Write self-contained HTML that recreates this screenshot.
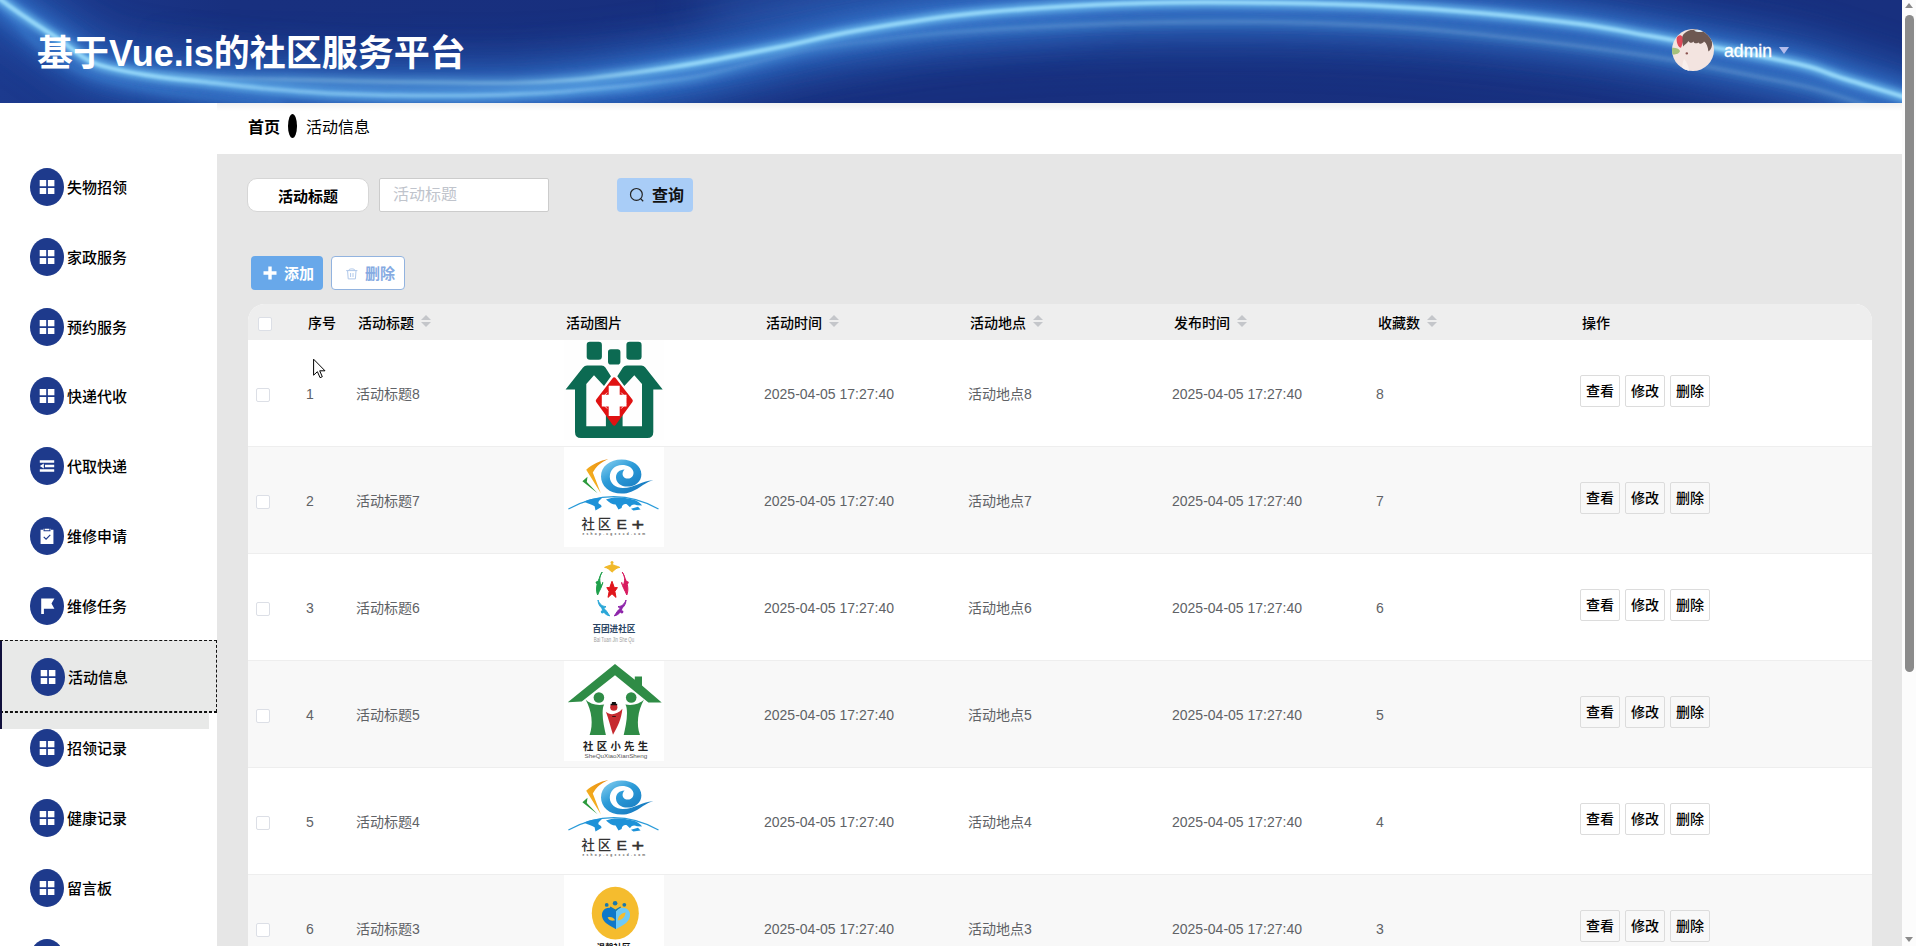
<!DOCTYPE html>
<html lang="zh-CN">
<head>
<meta charset="utf-8">
<title>基于Vue.is的社区服务平台</title>
<style>
*{box-sizing:border-box;margin:0;padding:0}
html,body{width:1916px;height:946px;overflow:hidden;background:#fff}
body{position:relative;font-family:"Liberation Sans","Noto Sans CJK SC",sans-serif;font-size:14px;color:#000}
#header{position:absolute;left:0;top:0;width:1902px;height:103px;overflow:hidden;background:#18307f}
#hbg{position:absolute;left:0;top:0}
#title{position:absolute;left:37px;top:27px;font-size:36px;font-weight:700;color:#fff;line-height:54px;white-space:nowrap}
#avatar{position:absolute;left:1672px;top:29px}
#uname{position:absolute;left:1724px;top:39px;letter-spacing:.1px;-webkit-text-stroke:.3px #fff;font-size:17.5px;line-height:24px;color:#fff}
#ucaret{position:absolute;left:1779px;top:47px;width:0;height:0;border-left:5.5px solid transparent;border-right:5.5px solid transparent;border-top:7px solid #b4bcec}
#hshadow{position:absolute;left:217px;top:103px;width:1685px;height:8px;background:linear-gradient(rgba(0,0,0,.06),rgba(0,0,0,0))}
#side{position:absolute;left:0;top:103px;width:217px;height:843px;background:#fff;overflow:hidden}
.mi{position:absolute;left:0;width:217px;height:38px;white-space:nowrap}
.ico{position:absolute;left:30px;top:0;width:34px;height:38px;border-radius:50%;background:#1e3a8c;display:block}
.ico svg{position:absolute;left:9px;top:11px}
.mt{position:absolute;left:67px;top:9px;font-size:15px;font-weight:500;line-height:22px;color:#000}
#side .mi{margin-top:-103px}
#actbg{position:absolute;left:0;top:538px;width:209px;height:88px;background:#e8e9e8}
#actbox{position:absolute;left:0;top:537px;width:217px;height:72px;background:#e8e9e8;border:1px dashed #111;border-left:0}
#actbox2{position:absolute;left:0;top:609px;width:217px;height:0;border-top:1px dashed #111}
#actbar{position:absolute;left:0;top:538px;width:2px;height:88px;background:#10103c}
#main{position:absolute;left:217px;top:103px;width:1685px;height:843px;background:#e6e6e6;overflow:hidden}
#bread{position:absolute;left:0;top:0;width:1685px;height:51px;background:#fff;font-size:16px;line-height:24px}
#bread b{position:absolute;left:31px;top:13px;font-weight:700}
#bread i{position:absolute;left:71px;top:11px;width:9px;height:24px;border-radius:50%;background:#000}
#bread span{position:absolute;left:89px;top:13px}
#slabel{position:absolute;left:30px;top:75px;width:122px;height:34px;border:1px solid #d6d6d6;border-radius:10px;background:#fff;font-size:15px;font-weight:700;text-align:center;line-height:35px}
#sinput{position:absolute;left:162px;top:75px;width:170px;height:34px;border:1px solid #ccc;border-radius:2px;background:#fff;font-size:16px;line-height:32px;color:#c0c4cc;padding-left:13px}
#sbtn{position:absolute;left:400px;top:75px;width:76px;height:34px;border-radius:4px;background:#a9cdf7;font-size:16px;font-weight:700;line-height:36px;color:#111}
#sbtn svg{position:absolute;left:12px;top:9px}
#sbtn span{position:absolute;left:35px;top:0}
#badd{position:absolute;left:34px;top:153px;width:72px;height:34px;border-radius:4px;background:#68a8ea;color:#fff;font-size:15px;font-weight:700;line-height:35px}
#badd svg{position:absolute;left:12px;top:10px}
#badd span{position:absolute;left:33px;top:0}
#bdel{position:absolute;left:114px;top:153px;width:74px;height:34px;border-radius:4px;background:#fff;border:1px solid #92b3df;color:#86abe2;font-size:15px;font-weight:700;line-height:34px}
#bdel svg{position:absolute;left:13px;top:10px}
#bdel span{position:absolute;left:33px;top:0}
#tbl{position:absolute;left:31px;top:201px;width:1624px;height:700px;border-radius:17px 17px 0 0;overflow:hidden;background:#fff}
.thead{position:absolute;left:0;top:0;width:1624px;height:36px;background:#eee}
.th{position:absolute;top:8px;font-size:14px;font-weight:500;line-height:22px;color:#000;white-space:nowrap}
.hcb{position:absolute;left:10px;top:13px;width:14px;height:14px;border:1px solid #dcdfe6;border-radius:2px;background:#fff}
.cw{display:inline-block;position:relative;width:10px;height:14px;margin-left:7px;vertical-align:top;top:3px}
.cu{position:absolute;left:0;top:0;border:5px solid transparent;border-top-width:0;border-bottom-color:#c4c6ca}
.cd{position:absolute;left:0;top:7px;border:5px solid transparent;border-bottom-width:0;border-top-color:#c4c6ca}
.tr{position:absolute;left:0;width:1624px;height:107px;border-bottom:1px solid #eee;background:#fff}
.tr.st{background:#f8f8f8}
.cb{position:absolute;left:8px;top:48px;width:14px;height:14px;border:1px solid #dcdfe6;border-radius:2px;background:#fff}
.td{position:absolute;top:43px;font-size:14px;line-height:23px;color:#606266;white-space:nowrap}
.pic{position:absolute;left:316px;top:0;width:100px;height:100px;display:block;background:#fff}
.pic svg{display:block}
.ops{position:absolute;left:1332px;top:35px;white-space:nowrap;font-size:0}
.ops b{display:inline-block;width:40px;height:32px;margin-right:5px;border:1px solid #dcdcdc;border-radius:2px;font-size:14px;font-weight:500;line-height:31px;text-align:center;color:#000}
#sbar{position:absolute;left:1902px;top:0;width:14px;height:946px;background:#fcfcfc}
#sthumb{position:absolute;left:3px;top:15px;width:9px;height:657px;border-radius:4.5px;background:#8b8b8b}
#sup{position:absolute;left:3px;top:3px;width:0;height:0;border-left:4.5px solid transparent;border-right:4.5px solid transparent;border-bottom:5px solid #8b8b8b}
#sdn{position:absolute;left:3px;top:937px;width:0;height:0;border-left:4.5px solid transparent;border-right:4.5px solid transparent;border-top:5px solid #8b8b8b}
#cursor{position:absolute;left:312px;top:358px}
</style>
</head>
<body>
<div id="header">
<svg id="hbg" width="1902" height="103" viewBox="0 0 1902 103" preserveAspectRatio="none">
<defs>
<linearGradient id="hg" x1="0" y1="0" x2="1" y2="0">
<stop offset="0" stop-color="#1c3a8e"/><stop offset="0.12" stop-color="#18307f"/><stop offset="0.5" stop-color="#182f7e"/><stop offset="1" stop-color="#18307f"/>
</linearGradient>
<linearGradient id="mLg" gradientUnits="userSpaceOnUse" x1="0" y1="0" x2="1902" y2="0">
<stop offset="0" stop-color="#fff"/><stop offset="0.33" stop-color="#fff"/><stop offset="0.42" stop-color="#8a8a8a"/><stop offset="1" stop-color="#8a8a8a"/>
</linearGradient>
<linearGradient id="mUg" gradientUnits="userSpaceOnUse" x1="0" y1="0" x2="1902" y2="0">
<stop offset="0.07" stop-color="#000"/><stop offset="0.15" stop-color="#707070"/><stop offset="0.27" stop-color="#8c8c8c"/><stop offset="0.36" stop-color="#fff"/><stop offset="1" stop-color="#fff"/>
</linearGradient>
<mask id="mL" maskUnits="userSpaceOnUse" x="-40" y="-60" width="2000" height="240"><rect x="-40" y="-60" width="2000" height="240" fill="url(#mLg)"/></mask>
<mask id="mU" maskUnits="userSpaceOnUse" x="-40" y="-60" width="2000" height="240"><rect x="-40" y="-60" width="2000" height="240" fill="url(#mUg)"/></mask>
<filter id="b30" x="-10%" y="-100%" width="120%" height="300%"><feGaussianBlur stdDeviation="22"/></filter>
<filter id="b12" x="-10%" y="-100%" width="120%" height="300%"><feGaussianBlur stdDeviation="9"/></filter>
<filter id="b4" x="-10%" y="-100%" width="120%" height="300%"><feGaussianBlur stdDeviation="3"/></filter>
<filter id="b1" x="-10%" y="-100%" width="120%" height="300%"><feGaussianBlur stdDeviation="1.1"/></filter>
</defs>
<rect width="1902" height="103" fill="url(#hg)"/>
<ellipse cx="900" cy="6" rx="210" ry="26" fill="#3a74cc" opacity="0.45" filter="url(#b30)"/>
<g fill="none" stroke-linecap="round">
<path d="M-8.0 -6.0C-6.7 -4.2 -4.0 0.5 0.0 5.0C4.0 9.5 10.8 15.5 16.0 21.0C21.2 26.5 24.5 32.0 31.0 38.0C37.5 44.0 45.2 51.0 55.0 57.0C64.8 63.0 75.8 69.0 90.0 74.0C104.2 79.0 121.7 83.3 140.0 87.0C158.3 90.7 176.7 93.5 200.0 96.0C223.3 98.5 266.7 101.0 280.0 102.0" stroke="#3c82d6" stroke-width="10" opacity="0.6" filter="url(#b12)"/>
<path d="M-8.0 -6.0C-6.7 -4.2 -4.0 0.5 0.0 5.0C4.0 9.5 10.8 15.5 16.0 21.0C21.2 26.5 24.5 32.0 31.0 38.0C37.5 44.0 45.2 51.0 55.0 57.0C64.8 63.0 75.8 69.0 90.0 74.0C104.2 79.0 121.7 83.3 140.0 87.0C158.3 90.7 176.7 93.5 200.0 96.0C223.3 98.5 266.7 101.0 280.0 102.0" stroke="#5aa6e4" stroke-width="4" opacity="0.5" filter="url(#b4)"/>
<g mask="url(#mL)">
<path d="M-14.0 -12.0C-11.7 -10.2 -4.3 -4.3 0.0 -1.0C4.3 2.3 7.8 5.0 12.0 8.0C16.2 11.0 20.8 14.2 25.0 17.0C29.2 19.8 31.2 21.2 37.0 25.0C42.8 28.8 50.5 33.7 60.0 40.0C69.5 46.3 79.7 57.2 94.0 63.0C108.3 68.8 126.8 71.8 146.0 75.0C165.2 78.2 188.2 80.2 209.0 82.5C229.8 84.8 250.2 87.2 271.0 89.0C291.8 90.8 312.5 92.5 334.0 93.5C355.5 94.5 380.7 95.0 400.0 95.3C419.3 95.6 435.3 95.6 450.0 95.6C464.7 95.5 471.3 95.5 488.0 95.0C504.7 94.5 529.2 93.8 550.0 92.5C570.8 91.2 594.7 88.8 613.0 87.0C631.3 85.2 645.5 83.4 660.0 81.5C674.5 79.6 683.3 78.9 700.0 75.5C716.7 72.1 742.2 65.2 760.0 61.0C777.8 56.8 788.7 53.3 807.0 50.0C825.3 46.7 847.8 43.8 870.0 41.0C892.2 38.2 906.2 35.7 940.0 33.0C973.8 30.3 1034.2 26.8 1073.0 25.0C1111.8 23.2 1138.5 22.5 1173.0 22.0C1207.5 21.5 1240.0 21.0 1280.0 22.0C1320.0 23.0 1368.7 24.7 1413.0 28.0C1457.3 31.3 1506.5 37.3 1546.0 42.0C1585.5 46.7 1624.3 52.2 1650.0 56.0C1675.7 59.8 1683.3 61.8 1700.0 65.0C1716.7 68.2 1732.0 71.3 1750.0 75.0C1768.0 78.7 1792.2 83.2 1808.0 87.0C1823.8 90.8 1833.0 94.2 1845.0 98.0C1857.0 101.8 1874.2 108.0 1880.0 110.0" stroke="#2f6cc4" stroke-width="46" opacity="0.78" filter="url(#b30)"/>
<path d="M-14.0 -12.0C-11.7 -10.2 -4.3 -4.3 0.0 -1.0C4.3 2.3 7.8 5.0 12.0 8.0C16.2 11.0 20.8 14.2 25.0 17.0C29.2 19.8 31.2 21.2 37.0 25.0C42.8 28.8 50.5 33.7 60.0 40.0C69.5 46.3 79.7 57.2 94.0 63.0C108.3 68.8 126.8 71.8 146.0 75.0C165.2 78.2 188.2 80.2 209.0 82.5C229.8 84.8 250.2 87.2 271.0 89.0C291.8 90.8 312.5 92.5 334.0 93.5C355.5 94.5 380.7 95.0 400.0 95.3C419.3 95.6 435.3 95.6 450.0 95.6C464.7 95.5 471.3 95.5 488.0 95.0C504.7 94.5 529.2 93.8 550.0 92.5C570.8 91.2 594.7 88.8 613.0 87.0C631.3 85.2 645.5 83.4 660.0 81.5C674.5 79.6 683.3 78.9 700.0 75.5C716.7 72.1 742.2 65.2 760.0 61.0C777.8 56.8 788.7 53.3 807.0 50.0C825.3 46.7 847.8 43.8 870.0 41.0C892.2 38.2 906.2 35.7 940.0 33.0C973.8 30.3 1034.2 26.8 1073.0 25.0C1111.8 23.2 1138.5 22.5 1173.0 22.0C1207.5 21.5 1240.0 21.0 1280.0 22.0C1320.0 23.0 1368.7 24.7 1413.0 28.0C1457.3 31.3 1506.5 37.3 1546.0 42.0C1585.5 46.7 1624.3 52.2 1650.0 56.0C1675.7 59.8 1683.3 61.8 1700.0 65.0C1716.7 68.2 1732.0 71.3 1750.0 75.0C1768.0 78.7 1792.2 83.2 1808.0 87.0C1823.8 90.8 1833.0 94.2 1845.0 98.0C1857.0 101.8 1874.2 108.0 1880.0 110.0" stroke="#3c82d6" stroke-width="18" opacity="0.80" filter="url(#b12)"/>
<path d="M-14.0 -12.0C-11.7 -10.2 -4.3 -4.3 0.0 -1.0C4.3 2.3 7.8 5.0 12.0 8.0C16.2 11.0 20.8 14.2 25.0 17.0C29.2 19.8 31.2 21.2 37.0 25.0C42.8 28.8 50.5 33.7 60.0 40.0C69.5 46.3 79.7 57.2 94.0 63.0C108.3 68.8 126.8 71.8 146.0 75.0C165.2 78.2 188.2 80.2 209.0 82.5C229.8 84.8 250.2 87.2 271.0 89.0C291.8 90.8 312.5 92.5 334.0 93.5C355.5 94.5 380.7 95.0 400.0 95.3C419.3 95.6 435.3 95.6 450.0 95.6C464.7 95.5 471.3 95.5 488.0 95.0C504.7 94.5 529.2 93.8 550.0 92.5C570.8 91.2 594.7 88.8 613.0 87.0C631.3 85.2 645.5 83.4 660.0 81.5C674.5 79.6 683.3 78.9 700.0 75.5C716.7 72.1 742.2 65.2 760.0 61.0C777.8 56.8 788.7 53.3 807.0 50.0C825.3 46.7 847.8 43.8 870.0 41.0C892.2 38.2 906.2 35.7 940.0 33.0C973.8 30.3 1034.2 26.8 1073.0 25.0C1111.8 23.2 1138.5 22.5 1173.0 22.0C1207.5 21.5 1240.0 21.0 1280.0 22.0C1320.0 23.0 1368.7 24.7 1413.0 28.0C1457.3 31.3 1506.5 37.3 1546.0 42.0C1585.5 46.7 1624.3 52.2 1650.0 56.0C1675.7 59.8 1683.3 61.8 1700.0 65.0C1716.7 68.2 1732.0 71.3 1750.0 75.0C1768.0 78.7 1792.2 83.2 1808.0 87.0C1823.8 90.8 1833.0 94.2 1845.0 98.0C1857.0 101.8 1874.2 108.0 1880.0 110.0" stroke="#6fbcee" stroke-width="10" opacity="0.90" filter="url(#b4)"/>
<path d="M-14.0 -12.0C-11.7 -10.2 -4.3 -4.3 0.0 -1.0C4.3 2.3 7.8 5.0 12.0 8.0C16.2 11.0 20.8 14.2 25.0 17.0C29.2 19.8 31.2 21.2 37.0 25.0C42.8 28.8 50.5 33.7 60.0 40.0C69.5 46.3 79.7 57.2 94.0 63.0C108.3 68.8 126.8 71.8 146.0 75.0C165.2 78.2 188.2 80.2 209.0 82.5C229.8 84.8 250.2 87.2 271.0 89.0C291.8 90.8 312.5 92.5 334.0 93.5C355.5 94.5 380.7 95.0 400.0 95.3C419.3 95.6 435.3 95.6 450.0 95.6C464.7 95.5 471.3 95.5 488.0 95.0C504.7 94.5 529.2 93.8 550.0 92.5C570.8 91.2 594.7 88.8 613.0 87.0C631.3 85.2 645.5 83.4 660.0 81.5C674.5 79.6 683.3 78.9 700.0 75.5C716.7 72.1 742.2 65.2 760.0 61.0C777.8 56.8 788.7 53.3 807.0 50.0C825.3 46.7 847.8 43.8 870.0 41.0C892.2 38.2 906.2 35.7 940.0 33.0C973.8 30.3 1034.2 26.8 1073.0 25.0C1111.8 23.2 1138.5 22.5 1173.0 22.0C1207.5 21.5 1240.0 21.0 1280.0 22.0C1320.0 23.0 1368.7 24.7 1413.0 28.0C1457.3 31.3 1506.5 37.3 1546.0 42.0C1585.5 46.7 1624.3 52.2 1650.0 56.0C1675.7 59.8 1683.3 61.8 1700.0 65.0C1716.7 68.2 1732.0 71.3 1750.0 75.0C1768.0 78.7 1792.2 83.2 1808.0 87.0C1823.8 90.8 1833.0 94.2 1845.0 98.0C1857.0 101.8 1874.2 108.0 1880.0 110.0" stroke="#92d4f7" stroke-width="4" opacity="1.00" filter="url(#b1)"/>
</g>
<g mask="url(#mU)">
<path d="M120.0 66.0C125.0 67.0 135.2 70.2 150.0 72.0C164.8 73.8 188.8 75.8 209.0 77.0C229.2 78.2 250.2 78.4 271.0 79.0C291.8 79.6 312.5 80.1 334.0 80.6C355.5 81.1 380.7 81.7 400.0 82.0C419.3 82.3 431.8 82.4 450.0 82.6C468.2 82.8 488.8 83.4 509.0 83.0C529.2 82.6 550.2 81.7 571.0 80.0C591.8 78.3 612.5 75.6 634.0 72.7C655.5 69.8 675.7 66.8 700.0 62.5C724.3 58.2 754.2 52.2 780.0 47.0C805.8 41.8 825.0 36.3 855.0 31.0C885.0 25.7 923.7 19.2 960.0 15.0C996.3 10.8 1037.5 8.1 1073.0 6.0C1108.5 3.9 1138.5 3.0 1173.0 2.5C1207.5 2.0 1245.5 2.4 1280.0 3.0C1314.5 3.6 1346.7 4.3 1380.0 6.0C1413.3 7.7 1446.7 10.0 1480.0 13.0C1513.3 16.0 1551.7 20.2 1580.0 24.0C1608.3 27.8 1627.2 32.0 1650.0 36.0C1672.8 40.0 1696.2 44.2 1717.0 48.0C1737.8 51.8 1759.5 55.8 1775.0 59.0C1790.5 62.2 1798.3 63.7 1810.0 67.0C1821.7 70.3 1829.8 74.2 1845.0 79.0C1860.2 83.8 1886.8 91.5 1901.0 96.0C1915.2 100.5 1925.2 104.3 1930.0 106.0" stroke="#2f6cc4" stroke-width="46" opacity="0.78" filter="url(#b30)"/>
<path d="M120.0 66.0C125.0 67.0 135.2 70.2 150.0 72.0C164.8 73.8 188.8 75.8 209.0 77.0C229.2 78.2 250.2 78.4 271.0 79.0C291.8 79.6 312.5 80.1 334.0 80.6C355.5 81.1 380.7 81.7 400.0 82.0C419.3 82.3 431.8 82.4 450.0 82.6C468.2 82.8 488.8 83.4 509.0 83.0C529.2 82.6 550.2 81.7 571.0 80.0C591.8 78.3 612.5 75.6 634.0 72.7C655.5 69.8 675.7 66.8 700.0 62.5C724.3 58.2 754.2 52.2 780.0 47.0C805.8 41.8 825.0 36.3 855.0 31.0C885.0 25.7 923.7 19.2 960.0 15.0C996.3 10.8 1037.5 8.1 1073.0 6.0C1108.5 3.9 1138.5 3.0 1173.0 2.5C1207.5 2.0 1245.5 2.4 1280.0 3.0C1314.5 3.6 1346.7 4.3 1380.0 6.0C1413.3 7.7 1446.7 10.0 1480.0 13.0C1513.3 16.0 1551.7 20.2 1580.0 24.0C1608.3 27.8 1627.2 32.0 1650.0 36.0C1672.8 40.0 1696.2 44.2 1717.0 48.0C1737.8 51.8 1759.5 55.8 1775.0 59.0C1790.5 62.2 1798.3 63.7 1810.0 67.0C1821.7 70.3 1829.8 74.2 1845.0 79.0C1860.2 83.8 1886.8 91.5 1901.0 96.0C1915.2 100.5 1925.2 104.3 1930.0 106.0" stroke="#3c82d6" stroke-width="18" opacity="0.80" filter="url(#b12)"/>
<path d="M120.0 66.0C125.0 67.0 135.2 70.2 150.0 72.0C164.8 73.8 188.8 75.8 209.0 77.0C229.2 78.2 250.2 78.4 271.0 79.0C291.8 79.6 312.5 80.1 334.0 80.6C355.5 81.1 380.7 81.7 400.0 82.0C419.3 82.3 431.8 82.4 450.0 82.6C468.2 82.8 488.8 83.4 509.0 83.0C529.2 82.6 550.2 81.7 571.0 80.0C591.8 78.3 612.5 75.6 634.0 72.7C655.5 69.8 675.7 66.8 700.0 62.5C724.3 58.2 754.2 52.2 780.0 47.0C805.8 41.8 825.0 36.3 855.0 31.0C885.0 25.7 923.7 19.2 960.0 15.0C996.3 10.8 1037.5 8.1 1073.0 6.0C1108.5 3.9 1138.5 3.0 1173.0 2.5C1207.5 2.0 1245.5 2.4 1280.0 3.0C1314.5 3.6 1346.7 4.3 1380.0 6.0C1413.3 7.7 1446.7 10.0 1480.0 13.0C1513.3 16.0 1551.7 20.2 1580.0 24.0C1608.3 27.8 1627.2 32.0 1650.0 36.0C1672.8 40.0 1696.2 44.2 1717.0 48.0C1737.8 51.8 1759.5 55.8 1775.0 59.0C1790.5 62.2 1798.3 63.7 1810.0 67.0C1821.7 70.3 1829.8 74.2 1845.0 79.0C1860.2 83.8 1886.8 91.5 1901.0 96.0C1915.2 100.5 1925.2 104.3 1930.0 106.0" stroke="#6fbcee" stroke-width="10" opacity="0.90" filter="url(#b4)"/>
<path d="M120.0 66.0C125.0 67.0 135.2 70.2 150.0 72.0C164.8 73.8 188.8 75.8 209.0 77.0C229.2 78.2 250.2 78.4 271.0 79.0C291.8 79.6 312.5 80.1 334.0 80.6C355.5 81.1 380.7 81.7 400.0 82.0C419.3 82.3 431.8 82.4 450.0 82.6C468.2 82.8 488.8 83.4 509.0 83.0C529.2 82.6 550.2 81.7 571.0 80.0C591.8 78.3 612.5 75.6 634.0 72.7C655.5 69.8 675.7 66.8 700.0 62.5C724.3 58.2 754.2 52.2 780.0 47.0C805.8 41.8 825.0 36.3 855.0 31.0C885.0 25.7 923.7 19.2 960.0 15.0C996.3 10.8 1037.5 8.1 1073.0 6.0C1108.5 3.9 1138.5 3.0 1173.0 2.5C1207.5 2.0 1245.5 2.4 1280.0 3.0C1314.5 3.6 1346.7 4.3 1380.0 6.0C1413.3 7.7 1446.7 10.0 1480.0 13.0C1513.3 16.0 1551.7 20.2 1580.0 24.0C1608.3 27.8 1627.2 32.0 1650.0 36.0C1672.8 40.0 1696.2 44.2 1717.0 48.0C1737.8 51.8 1759.5 55.8 1775.0 59.0C1790.5 62.2 1798.3 63.7 1810.0 67.0C1821.7 70.3 1829.8 74.2 1845.0 79.0C1860.2 83.8 1886.8 91.5 1901.0 96.0C1915.2 100.5 1925.2 104.3 1930.0 106.0" stroke="#92d4f7" stroke-width="4" opacity="1.00" filter="url(#b1)"/>
</g>
</g>
</svg>
<div id="title">基于Vue.is的社区服务平台</div>
<svg id="avatar" width="42" height="42" viewBox="0 0 42 42"><defs><clipPath id="avc"><circle cx="21" cy="21" r="21"/></clipPath><filter id="avb"><feGaussianBlur stdDeviation="0.7"/></filter></defs><g clip-path="url(#avc)"><rect width="42" height="42" fill="#f3e4e0"/><g filter="url(#avb)"><path d="M10 9C11 3 18 0 25 0.6C33 1.4 39 6 40 13C40.6 17 39 21 36.4 22.4C36 18 34.6 14 32 12.4C30.6 14.6 28 15.6 26.4 13.4C24.6 15 22 14.6 21.4 12.4C19.6 14.6 17.4 14 16.4 12C15 14.6 12.6 15.4 11.4 17.4C10.4 15 9.6 12 10 9Z" fill="#5b453f" opacity="0.88"/><path d="M4.6 9C6 5.4 9.4 5.4 10.4 8C10.8 12 10.4 16 9 18.8C6.4 18.8 4.4 14 4.6 9Z" fill="#e0485a"/><path d="M0 18.8C3 18.4 7 19.4 8 22C7.4 24.6 3 26 0 25.5Z" fill="#a5c27c"/><path d="M22 1.4C25 0.2 29 0.6 31 2.4C28 3.4 24.6 3 22 1.4Z" fill="#dfe8ee"/><ellipse cx="14.8" cy="24.4" rx="1.3" ry="1.1" fill="#8a5250"/><path d="M12 30C15 33 17 38 17 42H10C10 38 10.6 33 12 30Z" fill="#f9efec"/></g></g></svg>
<div id="uname">admin</div><div id="ucaret"></div>
</div>
<div id="side">
<div id="actbg"></div><div id="actbox"></div><div id="actbox2"></div><div id="actbar"></div>
<div class="mi" style="top:168.0px;left:0px"><span class="ico"><svg viewBox="0 0 16 16" width="16" height="16"><path fill="#fff" d="M0.7 1h6.5v6.2H0.7zM8.9 1h6.5v6.2H8.9zM0.7 8.9h6.5v6.2H0.7zM8.9 8.9h6.5v6.2H8.9z"/></svg></span><span class="mt">失物招领</span></div>
<div class="mi" style="top:238.0px;left:0px"><span class="ico"><svg viewBox="0 0 16 16" width="16" height="16"><path fill="#fff" d="M0.7 1h6.5v6.2H0.7zM8.9 1h6.5v6.2H8.9zM0.7 8.9h6.5v6.2H0.7zM8.9 8.9h6.5v6.2H8.9z"/></svg></span><span class="mt">家政服务</span></div>
<div class="mi" style="top:307.5px;left:0px"><span class="ico"><svg viewBox="0 0 16 16" width="16" height="16"><path fill="#fff" d="M0.7 1h6.5v6.2H0.7zM8.9 1h6.5v6.2H8.9zM0.7 8.9h6.5v6.2H0.7zM8.9 8.9h6.5v6.2H8.9z"/></svg></span><span class="mt">预约服务</span></div>
<div class="mi" style="top:377.3px;left:0px"><span class="ico"><svg viewBox="0 0 16 16" width="16" height="16"><path fill="#fff" d="M0.7 1h6.5v6.2H0.7zM8.9 1h6.5v6.2H8.9zM0.7 8.9h6.5v6.2H0.7zM8.9 8.9h6.5v6.2H8.9z"/></svg></span><span class="mt">快递代收</span></div>
<div class="mi" style="top:447.2px;left:0px"><span class="ico"><svg viewBox="0 0 16 16" width="16" height="16"><path fill="#fff" d="M0.8 2.3h14.4v2.4H0.8zM6 6.8h9.2v2.4H6zM0.8 11.3h14.4v2.4H0.8zM4.8 5.4v5.2L0.8 8z"/></svg></span><span class="mt">代取快递</span></div>
<div class="mi" style="top:517.3px;left:0px"><span class="ico"><svg viewBox="0 0 16 16" width="16" height="16"><g transform="translate(8 8.4) scale(1.17) translate(-8 -8.2)"><path fill="#fff" d="M2.5 2.5h2.2V1.6h6.6v.9h2.2v12.3h-11z"/><path d="M5.5 1v2.4h5V1" fill="none" stroke="#1e3a8c" stroke-width="0.9"/><path d="M5.2 8.6l2 2 3.6-3.7" fill="none" stroke="#1e3a8c" stroke-width="1"/></g></svg></span><span class="mt">维修申请</span></div>
<div class="mi" style="top:587.0px;left:0px"><span class="ico"><svg viewBox="0 0 16 16" width="16" height="16"><path fill="#fff" d="M2.2 0.4h2.7v16h-2.7zM4.8 0.4h10.6l-2.9 5.2 2.9 5.2h-10.6z"/></svg></span><span class="mt">维修任务</span></div>
<div class="mi" style="top:658.0px;left:1px"><span class="ico"><svg viewBox="0 0 16 16" width="16" height="16"><path fill="#fff" d="M0.7 1h6.5v6.2H0.7zM8.9 1h6.5v6.2H8.9zM0.7 8.9h6.5v6.2H0.7zM8.9 8.9h6.5v6.2H8.9z"/></svg></span><span class="mt">活动信息</span></div>
<div class="mi" style="top:729.0px;left:0px"><span class="ico"><svg viewBox="0 0 16 16" width="16" height="16"><path fill="#fff" d="M0.7 1h6.5v6.2H0.7zM8.9 1h6.5v6.2H8.9zM0.7 8.9h6.5v6.2H0.7zM8.9 8.9h6.5v6.2H8.9z"/></svg></span><span class="mt">招领记录</span></div>
<div class="mi" style="top:799.0px;left:0px"><span class="ico"><svg viewBox="0 0 16 16" width="16" height="16"><path fill="#fff" d="M0.7 1h6.5v6.2H0.7zM8.9 1h6.5v6.2H8.9zM0.7 8.9h6.5v6.2H0.7zM8.9 8.9h6.5v6.2H8.9z"/></svg></span><span class="mt">健康记录</span></div>
<div class="mi" style="top:869.0px;left:0px"><span class="ico"><svg viewBox="0 0 16 16" width="16" height="16"><path fill="#fff" d="M0.7 1h6.5v6.2H0.7zM8.9 1h6.5v6.2H8.9zM0.7 8.9h6.5v6.2H0.7zM8.9 8.9h6.5v6.2H8.9z"/></svg></span><span class="mt">留言板</span></div>
<div class="mi" style="top:939.0px;left:0px"><span class="ico"><svg viewBox="0 0 16 16" width="16" height="16"><path fill="#fff" d="M0.7 1h6.5v6.2H0.7zM8.9 1h6.5v6.2H8.9zM0.7 8.9h6.5v6.2H0.7zM8.9 8.9h6.5v6.2H8.9z"/></svg></span><span class="mt"></span></div>
</div>
<div id="main">
<div id="bread"><b>首页</b><i></i><span>活动信息</span></div>
<div id="slabel">活动标题</div>
<div id="sinput">活动标题</div>
<div id="sbtn"><svg width="16" height="16" viewBox="0 0 16 16"><circle cx="7.4" cy="7.4" r="5.9" fill="none" stroke="#222" stroke-width="1.2"/><path d="M11.6 11.6l2.6 2.6" stroke="#222" stroke-width="1.3" fill="none"/></svg><span>查询</span></div>
<div id="badd"><svg width="14" height="14" viewBox="0 0 14 14"><path d="M5.3 0.5h3.4v4.8h4.8v3.4H8.7v4.8H5.3V8.7H0.5V5.3h4.8z" fill="#fff"/></svg><span>添加</span></div>
<div id="bdel"><svg width="14" height="14" viewBox="0 0 14 14" fill="none" stroke="#b0c8ea" stroke-width="1"><path d="M1.2 3.6h11.2M3.6 3.4C4 1.4 9.6 1.4 10 3.4M2.6 3.9l.6 8h7.2l.6-8M5.6 6v4M8 6v4"/></svg><span>删除</span></div>
<div id="tbl">
<div class="thead"><span class="hcb"></span><span class="th" style="left:60px">序号</span><span class="th" style="left:110px">活动标题<span class="cw"><i class="cu"></i><i class="cd"></i></span></span><span class="th" style="left:318px">活动图片</span><span class="th" style="left:518px">活动时间<span class="cw"><i class="cu"></i><i class="cd"></i></span></span><span class="th" style="left:722px">活动地点<span class="cw"><i class="cu"></i><i class="cd"></i></span></span><span class="th" style="left:926px">发布时间<span class="cw"><i class="cu"></i><i class="cd"></i></span></span><span class="th" style="left:1130px">收藏数<span class="cw"><i class="cu"></i><i class="cd"></i></span></span><span class="th" style="left:1334px">操作</span></div>
<div class="tr" style="top:36px"><span class="cb"></span><span class="td" style="left:58px">1</span><span class="td" style="left:108px">活动标题8</span><span class="pic"><svg width="100" height="100" viewBox="0 0 100 100"><rect width="100" height="100" fill="#fefefe"/><g fill="#0c6a52"><rect x="22.7" y="1.8" width="15.2" height="18" rx="3.2"/><rect x="62.4" y="1.8" width="15.2" height="18" rx="3.2"/><rect x="44" y="9.3" width="12.4" height="15.3" rx="2.8"/><path d="M1.6 49.5L19 27.5Q20.6 25.5 23 25.5H37.5Q40 25.5 41.4 27.5L47 36.2L40 46L30 35.3L22.3 44V86.3H41.9V72H58.6V86.3H78V44L70.3 35.3L60.3 46L53.3 36.2L58.9 27.5Q60.3 25.5 62.8 25.5H77.3Q79.7 25.5 81.3 27.5L98.7 49.5H89.3V92Q89.3 98 83.3 98H17Q11 98 11 92V49.5Z"/></g><path d="M50.2 39.4L66.8 60.8L50.2 83.6L33.8 60.8Z" fill="#e01212" stroke="#e01212" stroke-width="4" stroke-linejoin="round"/><path d="M44.7 45.8h11v8.9h6.8v11.7h-6.8V76h-11v-9.6h-6.9V54.7h6.9z" fill="#fff"/><path d="M43.2 52.6L38.4 57.6M57.2 52.6L62 57.6M43.2 68.6L38.4 63.6M57.2 68.6L62 63.6" stroke="#fff" stroke-width="0.8"/></svg>
</span><span class="td" style="left:516px">2025-04-05 17:27:40</span><span class="td" style="left:720px">活动地点8</span><span class="td" style="left:924px">2025-04-05 17:27:40</span><span class="td" style="left:1128px">8</span><span class="ops"><b>查看</b><b>修改</b><b>删除</b></span></div>
<div class="tr st" style="top:143px"><span class="cb"></span><span class="td" style="left:58px">2</span><span class="td" style="left:108px">活动标题7</span><span class="pic"><svg width="100" height="100" viewBox="0 0 100 100"><defs><linearGradient id="swg" x1="0" y1="0" x2="1" y2="1"><stop offset="0" stop-color="#8fd4f2"/><stop offset="0.38" stop-color="#2c9bd8"/><stop offset="1" stop-color="#0f6fb8"/></linearGradient><linearGradient id="org" x1="1" y1="0" x2="0" y2="1"><stop offset="0" stop-color="#e88a12"/><stop offset="0.6" stop-color="#f2a81c"/><stop offset="1" stop-color="#f6d23a"/></linearGradient></defs><rect width="100" height="100" fill="#fff"/><path d="M44.4 12C36 13.5 28 17.5 22.2 22.8L36.8 46.3L28.8 25.6C32 19.5 37.5 14.8 44.4 12Z" fill="url(#org)"/><path d="M23.5 29.8L18.4 34.2L33.6 46.3L22.8 35Z" fill="#2c9a3c"/><path d="M89.4 33.2C80 34.6 72 46.6 57.6 46.6C45 46.6 37 38.4 37 29.4C37 19.4 46 12.6 57.6 12.6C69 12.6 77.4 19 77.4 27.4C77.4 34.6 71 39.6 63.6 39.6C56.6 39.6 52 35.4 52 30.2C52 25.6 55.4 22.6 60.6 22.4C57.4 25.4 58 30.4 62.4 31.4C67 32.4 70.2 29 69.4 24.8C68.6 20.4 63.6 18 58 18C50.6 18 45.8 23.4 45.8 29.8C45.8 36.6 51.8 41 59 41C70 41 77 34 89.4 33.2Z" fill="url(#swg)"/><path d="M4.4 62Q50 37.4 94.5 62" fill="none" stroke="#2a9bd9" stroke-width="1.3"/><g fill="#1e92d8"><path d="M20 54.5C26 52 32 51 38 50.6C37 53 33.5 54 34.6 56.5C36.5 57.5 38 58.5 37.4 60L31.5 63.5L30.6 59.2C27.5 57.5 24 56.6 20 54.5Z"/><path d="M42 52.6C46 50.6 52 50.2 56.5 50.6C60 51 66 51.6 72 53.6C74 55 77 56.6 78 58.5L73 58.2C70 56.5 67 57.6 66 60.2L62.8 57.2C60 56.6 58 58 57.6 61L54.5 62.6L51.6 57.6C48.5 57.6 45 55.6 42 52.6Z"/><path d="M67 61.8L74 59.8L76.6 62.6L69.4 63.4Z"/></g><g font-family="'Liberation Sans','Noto Sans CJK SC',sans-serif" fill="#333"><text x="17.6" y="81.8" font-size="13.4" font-weight="500">社</text><text x="33.8" y="81.8" font-size="13.4" font-weight="500">区</text><text transform="translate(52.6 81.6) scale(1.22 1)" font-size="12.8" stroke="#333" stroke-width="0.35">E</text><text transform="translate(67.4 82.6) scale(1.8 1.45)" font-size="12" stroke="#333" stroke-width="0.3">+</text><text x="18.4" y="87.8" font-size="3.2" font-weight="700" fill="#555" textLength="62.8" lengthAdjust="spacing">eshop.cgxxcd.com</text></g></svg>
</span><span class="td" style="left:516px">2025-04-05 17:27:40</span><span class="td" style="left:720px">活动地点7</span><span class="td" style="left:924px">2025-04-05 17:27:40</span><span class="td" style="left:1128px">7</span><span class="ops"><b>查看</b><b>修改</b><b>删除</b></span></div>
<div class="tr" style="top:250px"><span class="cb"></span><span class="td" style="left:58px">3</span><span class="td" style="left:108px">活动标题6</span><span class="pic"><svg width="100" height="100" viewBox="0 0 100 100"><rect width="100" height="100" fill="#fff"/><g stroke-width="1" stroke-linejoin="round"><circle cx="48" cy="8.6" r="1.5" fill="#f1b92a"/><path d="M40.6 13.4C44 11.6 46.4 11.8 48 9.8C49.6 11.8 52.4 11.6 55.8 13.4C53 13.6 50.8 15.4 48 18.2C45.4 15.4 43.4 13.6 40.6 13.4Z" fill="#f1b92a" stroke="#f1b92a"/><circle cx="33.4" cy="28.6" r="1.7" fill="#1fa04b"/><path d="M38.2 18C35.4 22 35 27 37.2 31.4C38.4 30.4 38.8 29.4 38.7 28.4C38 33 35.6 36 33.6 41C31.6 36 32.6 30 35.2 24.6C36 22 37 20 38.2 18Z" fill="#1fa04b" stroke="#1fa04b"/><circle cx="63" cy="28.6" r="1.7" fill="#d81b60"/><path d="M58.2 18C61 22 61.4 27 59.2 31.4C58 30.4 57.6 29.4 57.7 28.4C58.4 33 60.8 36 62.8 41C64.8 36 63.8 30 61.2 24.6C60.4 22 59.4 20 58.2 18Z" fill="#d81b60" stroke="#d81b60"/><path d="M48 27.3L50.3 33.6L53.4 33.6L50.9 37.4L52 43.4L48 39.8L44 43.4L45.1 37.4L42.8 33.6L45.7 33.6Z" fill="#e0161c" stroke="#e0161c"/><circle cx="38.4" cy="57.8" r="1.6" fill="#2aa7d8"/><path d="M34 46C35.6 50.6 38.6 52.4 42 52.6C41 53.6 40.4 54 39.6 54.2C42.6 56.4 43.8 59.4 45.7 61.9C41.4 61 38.8 58 37.8 54C35.4 52 34.2 49.4 34 46Z" fill="#2aa7d8" stroke="#2aa7d8"/><circle cx="57.8" cy="57.8" r="1.6" fill="#8e24aa"/><path d="M62 46C60.4 50.6 57.4 52.4 54 52.6C55 53.6 55.6 54 56.4 54.2C53.4 56.4 52.2 59.4 50.3 61.9C54.6 61 57.2 58 58.2 54C60.6 52 61.8 49.4 62 46Z" fill="#8e24aa" stroke="#8e24aa"/></g><g font-family="'Liberation Sans','Noto Sans CJK SC',sans-serif"><text x="28.4" y="78.2" font-size="8.7" font-weight="700" fill="#2b4563" textLength="43" lengthAdjust="spacingAndGlyphs">百团进社区</text><text x="29.8" y="88.4" font-size="7.2" fill="#9a9a9a" textLength="40.4" lengthAdjust="spacingAndGlyphs">Bai Tuan Jin She Qu</text></g></svg>
</span><span class="td" style="left:516px">2025-04-05 17:27:40</span><span class="td" style="left:720px">活动地点6</span><span class="td" style="left:924px">2025-04-05 17:27:40</span><span class="td" style="left:1128px">6</span><span class="ops"><b>查看</b><b>修改</b><b>删除</b></span></div>
<div class="tr st" style="top:357px"><span class="cb"></span><span class="td" style="left:58px">4</span><span class="td" style="left:108px">活动标题5</span><span class="pic"><svg width="100" height="100" viewBox="0 0 100 100"><rect width="100" height="100" fill="#fff"/><g fill="#2f8c46"><path d="M51 2.9L70.8 18.8V15.6H78V24.6L97.7 41.4H84.4L51 14.3L17.8 40.4L3.8 41.2Z"/><circle cx="34.9" cy="36.5" r="5.3"/><circle cx="67.2" cy="36.5" r="5.3"/><path d="M21.6 38.6C25.4 42.6 32 45 40.2 43.6C39 45.6 38.7 48 38.6 52C38.6 60 40.6 68 41.9 74H25.6C29.4 64 28 50 21.6 38.6Z"/><path d="M80 38.6C76.2 42.6 69.6 45 61.4 43.6C62.6 45.6 62.9 48 63 52C63 60 61 68 59.7 74H76C72.2 64 73.6 50 80 38.6Z"/></g><circle cx="49.8" cy="46.2" r="3.6" fill="#c62a2f"/><path d="M46.6 44.2h6.6v-1.4h-1.3v-1.9h-4v1.9h-1.3z" fill="#111"/><path d="M41.9 50.8C46 54.6 53 54 58.4 47.8C57.4 58 53.6 66 49 73.8C46.6 66 44.6 58 41.9 50.8Z" fill="#c62a2f"/><rect x="48.2" y="55" width="3.6" height="1" fill="#3a1212"/><g font-family="'Liberation Sans','Noto Sans CJK SC',sans-serif"><text x="19" y="88.6" font-size="10.4" font-weight="700" fill="#222" textLength="65.2" lengthAdjust="spacing">社区小先生</text><text x="20.5" y="97" font-size="5.6" fill="#555" textLength="62.8" lengthAdjust="spacingAndGlyphs">SheQuXiaoXianSheng</text></g></svg>
</span><span class="td" style="left:516px">2025-04-05 17:27:40</span><span class="td" style="left:720px">活动地点5</span><span class="td" style="left:924px">2025-04-05 17:27:40</span><span class="td" style="left:1128px">5</span><span class="ops"><b>查看</b><b>修改</b><b>删除</b></span></div>
<div class="tr" style="top:464px"><span class="cb"></span><span class="td" style="left:58px">5</span><span class="td" style="left:108px">活动标题4</span><span class="pic"><svg width="100" height="100" viewBox="0 0 100 100"><defs><linearGradient id="swg" x1="0" y1="0" x2="1" y2="1"><stop offset="0" stop-color="#8fd4f2"/><stop offset="0.38" stop-color="#2c9bd8"/><stop offset="1" stop-color="#0f6fb8"/></linearGradient><linearGradient id="org" x1="1" y1="0" x2="0" y2="1"><stop offset="0" stop-color="#e88a12"/><stop offset="0.6" stop-color="#f2a81c"/><stop offset="1" stop-color="#f6d23a"/></linearGradient></defs><rect width="100" height="100" fill="#fff"/><path d="M44.4 12C36 13.5 28 17.5 22.2 22.8L36.8 46.3L28.8 25.6C32 19.5 37.5 14.8 44.4 12Z" fill="url(#org)"/><path d="M23.5 29.8L18.4 34.2L33.6 46.3L22.8 35Z" fill="#2c9a3c"/><path d="M89.4 33.2C80 34.6 72 46.6 57.6 46.6C45 46.6 37 38.4 37 29.4C37 19.4 46 12.6 57.6 12.6C69 12.6 77.4 19 77.4 27.4C77.4 34.6 71 39.6 63.6 39.6C56.6 39.6 52 35.4 52 30.2C52 25.6 55.4 22.6 60.6 22.4C57.4 25.4 58 30.4 62.4 31.4C67 32.4 70.2 29 69.4 24.8C68.6 20.4 63.6 18 58 18C50.6 18 45.8 23.4 45.8 29.8C45.8 36.6 51.8 41 59 41C70 41 77 34 89.4 33.2Z" fill="url(#swg)"/><path d="M4.4 62Q50 37.4 94.5 62" fill="none" stroke="#2a9bd9" stroke-width="1.3"/><g fill="#1e92d8"><path d="M20 54.5C26 52 32 51 38 50.6C37 53 33.5 54 34.6 56.5C36.5 57.5 38 58.5 37.4 60L31.5 63.5L30.6 59.2C27.5 57.5 24 56.6 20 54.5Z"/><path d="M42 52.6C46 50.6 52 50.2 56.5 50.6C60 51 66 51.6 72 53.6C74 55 77 56.6 78 58.5L73 58.2C70 56.5 67 57.6 66 60.2L62.8 57.2C60 56.6 58 58 57.6 61L54.5 62.6L51.6 57.6C48.5 57.6 45 55.6 42 52.6Z"/><path d="M67 61.8L74 59.8L76.6 62.6L69.4 63.4Z"/></g><g font-family="'Liberation Sans','Noto Sans CJK SC',sans-serif" fill="#333"><text x="17.6" y="81.8" font-size="13.4" font-weight="500">社</text><text x="33.8" y="81.8" font-size="13.4" font-weight="500">区</text><text transform="translate(52.6 81.6) scale(1.22 1)" font-size="12.8" stroke="#333" stroke-width="0.35">E</text><text transform="translate(67.4 82.6) scale(1.8 1.45)" font-size="12" stroke="#333" stroke-width="0.3">+</text><text x="18.4" y="87.8" font-size="3.2" font-weight="700" fill="#555" textLength="62.8" lengthAdjust="spacing">eshop.cgxxcd.com</text></g></svg>
</span><span class="td" style="left:516px">2025-04-05 17:27:40</span><span class="td" style="left:720px">活动地点4</span><span class="td" style="left:924px">2025-04-05 17:27:40</span><span class="td" style="left:1128px">4</span><span class="ops"><b>查看</b><b>修改</b><b>删除</b></span></div>
<div class="tr st" style="top:571px"><span class="cb"></span><span class="td" style="left:58px">6</span><span class="td" style="left:108px">活动标题3</span><span class="pic"><svg width="100" height="100" viewBox="0 0 100 100"><rect width="100" height="100" fill="#fff"/><ellipse cx="51.3" cy="38.2" rx="23.5" ry="26.4" fill="#f5bc2e"/><g fill="#1b79ab"><circle cx="42.7" cy="29.9" r="1.9"/><circle cx="51.1" cy="28.2" r="2.3"/><circle cx="60.3" cy="29.8" r="1.9"/><path d="M46.4 31.4L51.4 34.6L56.4 31.4L57 32.6L51.4 37L45.8 32.6Z"/></g><path d="M52 36.6C49 31.8 42 31.4 39 36C36.6 40 38.4 45.4 42.6 48.6C46 51.2 49.6 52.6 52 54.2Z" fill="#0f78c9"/><path d="M52 36.6C55 31.8 62 31.4 65 36C67.4 40 65.6 45.4 61.4 48.6C58 51.2 54.4 52.6 52 54.2Z" fill="#6fcaf6"/><path d="M53.6 45.6C54 41 57.6 38 61.6 37.6C61.2 42 58 45.4 53.6 45.6Z" fill="#f5bc2e"/><path d="M51 45.2C49.6 42.2 46.4 41.4 43.6 42.4C45 45.2 48 46.4 51 45.2Z" fill="#f5bc2e"/><g font-family="'Liberation Sans','Noto Sans CJK SC',sans-serif"><text x="32.6" y="76" font-size="8.6" font-weight="700" fill="#111" textLength="34" lengthAdjust="spacing">温馨社区</text></g></svg>
</span><span class="td" style="left:516px">2025-04-05 17:27:40</span><span class="td" style="left:720px">活动地点3</span><span class="td" style="left:924px">2025-04-05 17:27:40</span><span class="td" style="left:1128px">3</span><span class="ops"><b>查看</b><b>修改</b><b>删除</b></span></div>
</div>
</div>
<div id="hshadow"></div>
<div id="sbar"><div id="sup"></div><div id="sthumb"></div><div id="sdn"></div></div>
<svg id="cursor" width="14" height="22" viewBox="0 0 14 22"><path d="M1.6 1.2v16l3.8-3.5 2.7 6 2.2-1-2.6-5.9h5.3z" fill="#fff" stroke="#000" stroke-width="1" stroke-linejoin="miter"/></svg>
</body>
</html>
